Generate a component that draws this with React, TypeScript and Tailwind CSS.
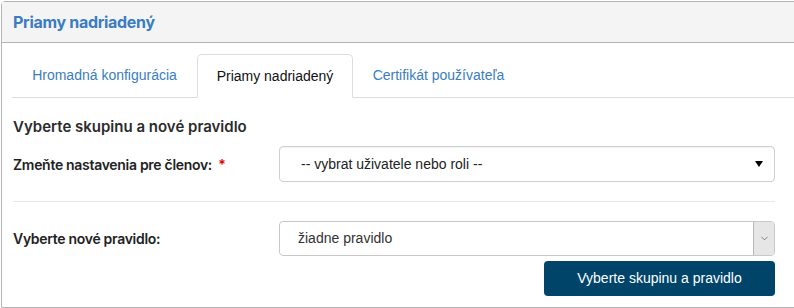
import { ChevronDown } from "lucide-react";

const tabs = [
  { label: "Hromadná konfigurácia", w: "w-[185px]" },
  { label: "Priamy nadriadený", w: "w-[156px]", active: true },
  { label: "Certifikát používateľa", w: "w-[171px]" },
];

export default function App() {
  return (
    <div className="pl-px pt-px bg-white w-[794px] h-[308px] overflow-hidden font-['Inter',sans-serif]">
      <div className="w-[820px] border border-[#b4b4b4] rounded-tl-[4px] bg-white">
        {/* en-tête du panneau */}
        <div className="h-[41px] bg-[#f4f4f4] border-b border-[#b4b4b4] flex items-center px-[11px]">
          <h2 className="text-[16px] font-bold text-[#3a7dc0] tracking-[-0.3px]">Priamy nadriadený</h2>
        </div>

        <div className="px-[10px] pt-[11px] pb-[11px]">
          {/* onglets */}
          <div className="flex border-b border-[#dddddd] h-[44px] font-['Liberation_Sans',sans-serif]">
            {tabs.map((t) =>
              t.active ? (
                <div
                  key={t.label}
                  className={`${t.w} h-[44px] -mb-px bg-white border border-[#dddddd] border-b-white rounded-t-[5px] flex items-center justify-center text-[14px] text-[#111]`}
                >
                  {t.label}
                </div>
              ) : (
                <div
                  key={t.label}
                  className={`${t.w} h-[43px] flex items-center justify-center text-[14px] text-[#3a7dc0]`}
                >
                  {t.label}
                </div>
              )
            )}
          </div>

          <div className="w-[763px] pl-[1px]">
            <h3 className="mt-[19px] h-[20px] leading-[20px] text-[15px] font-semibold text-[#2b2b2b]">
              Vyberte skupinu a nové pravidlo
            </h3>

            {/* ligne 1 */}
            <div className="mt-[9px] flex items-center">
              <label className="w-[266px] text-[14px] font-semibold text-[#222] tracking-[-0.3px]">
                Zmeňte nastavenia pre členov: <span className="text-[#e00000] ml-[3px]">*</span>
              </label>
              <div className="flex-1 h-[36px] border border-[#cfcfcf] rounded-[4px] flex items-center pl-[21px] pr-[10px] font-['Liberation_Sans',sans-serif] text-[14px] text-[#222] shadow-[inset_0_1px_1px_rgba(0,0,0,0.05)]">
                <span className="flex-1">-- vybrat uživatele nebo roli --</span>
                <span className="w-0 h-0 border-l-[4px] border-r-[4px] border-t-[6px] border-l-transparent border-r-transparent border-t-black mr-[1px]" />
              </div>
            </div>

            <div className="mt-[19px] border-t border-[#e8e8e8]" />

            {/* ligne 2 */}
            <div className="mt-[19px] flex items-center">
              <label className="w-[266px] text-[14px] font-semibold text-[#222] tracking-[-0.3px]">Vyberte nové pravidlo:</label>
              <div className="flex-1 h-[35px] border border-[#c8c8c8] rounded-[4px] flex items-center pl-[18px] font-['Liberation_Sans',sans-serif] text-[14px] text-[#333]">
                <span className="flex-1">žiadne pravidlo</span>
                <span className="w-[21px] h-[33px] bg-[#e6e6e6] border-l border-[#b8b8b8] rounded-r-[3px] flex items-center justify-center">
                  <ChevronDown size={11} strokeWidth={1.5} className="text-[#555]" />
                </span>
              </div>
            </div>

            <div className="mt-[5px] flex justify-end">
              <button className="w-[231px] h-[35px] rounded-[4px] bg-[#00446a] text-white text-[14px] font-['Liberation_Sans',sans-serif]">
                Vyberte skupinu a pravidlo
              </button>
            </div>
          </div>
        </div>
      </div>
    </div>
  );
}
